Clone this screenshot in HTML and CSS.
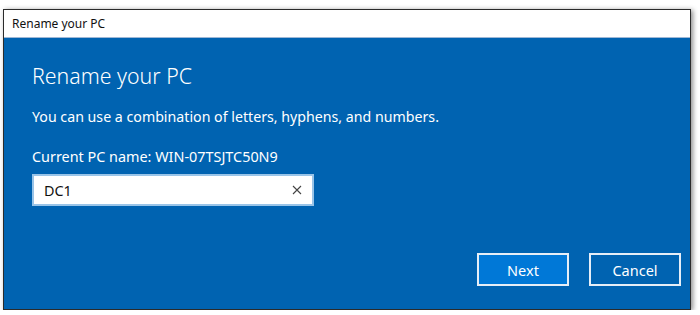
FILE: index.html
```html
<!DOCTYPE html>
<html lang="en">
<head>
    <meta charset="UTF-8">
    <meta name="viewport" content="width=device-width, initial-scale=1.0">
    <title>Rename your PC</title>
    <link rel="stylesheet" href="styles.css">
</head>
<body>
    <div class="window">
        <!-- Title bar -->
        <div class="titlebar">Rename your PC</div>

        <!-- Dialog body -->
        <div class="dialog">
            <h1>Rename your PC</h1>
            <p class="hint">You can use a combination of letters, hyphens, and numbers.</p>
            <p class="current">Current PC name: WIN-07TSJTC50N9</p>

            <div class="name-box">
                <span class="name-value">DC1</span>
                <svg class="clear-icon" width="10" height="10" viewBox="0 0 10 10">
                    <path d="M1 1 L9 9 M9 1 L1 9" stroke="#444" stroke-width="1.1" fill="none"/>
                </svg>
            </div>

            <div class="actions">
                <button class="btn btn-primary">Next</button>
                <button class="btn">Cancel</button>
            </div>
        </div>
    </div>
</body>
</html>
```

FILE: styles.css
```css
body {
    margin: 0;
    padding: 0;
    background-color: #fff;
    font-family: 'Noto Sans', 'Open Sans', sans-serif;
}

.window {
    width: 686px;
    height: 299px;
    margin: 9px 0 0 3px;
    border: 1px solid #2b2b2b;
    box-shadow: 2px 1px 5px rgba(0, 0, 0, 0.45);
    display: flex;
    flex-direction: column;
}

.titlebar {
    height: 27px;
    background-color: #fff;
    color: #111;
    font-size: 12px;
    line-height: 27px;
    padding-left: 8px;
    border-bottom: 1px solid #9fb8d6;
}

.dialog {
    flex: 1;
    background-color: #0063b1;
    color: #fff;
    padding: 0 9px 0 28px;
    display: flex;
    flex-direction: column;
}

h1 {
    margin: 24px 0 0;
    font-size: 21.3px;
    font-weight: 300;
    line-height: 28px;
}

.hint {
    margin: 17px 0 0;
    font-size: 14.2px;
    line-height: 20px;
}

.current {
    margin: 20px 0 0;
    font-size: 14.4px;
    line-height: 20px;
}

.name-box {
    margin-top: 7px;
    background-color: #fff;
    border: 2px solid #99c4e8;
    display: flex;
    align-items: center;
    justify-content: space-between;
    padding: 0 10px;
    box-sizing: border-box;
    width: 282px;
    height: 32px;
}

.name-value {
    color: #111;
    font-size: 14.4px;
}

.actions {
    margin-top: 47px;
    display: flex;
    justify-content: flex-end;
    gap: 20px;
}

.btn {
    width: 92px;
    height: 33px;
    border: 2px solid #e6eef7;
    background-color: #0063b1;
    color: #fff;
    font-family: 'Noto Sans', 'Open Sans', sans-serif;
    font-size: 14.5px;
    padding: 0;
}

.btn-primary {
    background-color: #0078d7;
}
```
